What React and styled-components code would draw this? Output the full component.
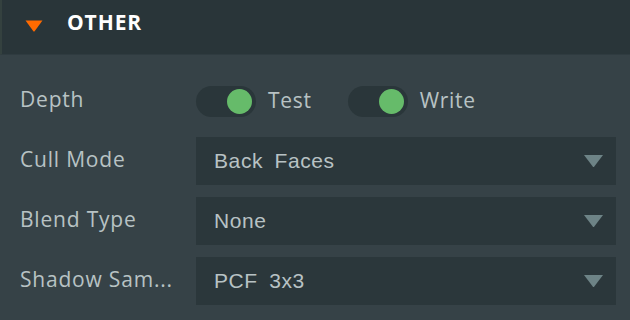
import React from "react";
import styled, { createGlobalStyle } from "styled-components";

const Global = createGlobalStyle`
  html, body { margin: 0; padding: 0; background: #364247; }
  body { width: 630px; height: 320px; overflow: hidden; font-family: "Open Sans", sans-serif; }
`;

const Panel = styled.div`
  width: 630px;
  height: 320px;
  background: #364247;
  display: flex;
  flex-direction: column;
`;

const Header = styled.div`
  height: 55px;
  background: #293539;
  border-left: 2px solid #34413f;
  border-bottom: 1px solid #2f3b40;
  display: flex;
  align-items: flex-start;
  padding: 8px 0 0 23px;
  box-sizing: border-box;
  flex-shrink: 0;
`;

const Caret = styled.svg`
  width: 18px;
  height: 12px;
  margin: 12px 24px 0 0;
`;

const Title = styled.div`
  color: #ffffff;
  font-family: "Open Sans", sans-serif;
  font-weight: 700;
  font-size: 21px;
  letter-spacing: 0.9px;
`;

const Body = styled.div`
  display: flex;
  flex-direction: column;
  gap: 12px;
  padding: 22px 14px 0 20px;
`;

const Row = styled.div`
  display: flex;
  align-items: center;
  height: 48px;
`;

const Label = styled.div`
  width: 176px;
  flex-shrink: 0;
  color: #b8c2c4;
  font-size: 21px;
  letter-spacing: 0.8px;
  white-space: nowrap;
  margin-top: -4px;
`;

const Toggles = styled.div`
  display: flex;
  align-items: center;
`;

const Toggle = styled.div`
  width: 60px;
  height: 31px;
  border-radius: 16px;
  background: #2a363a;
  display: flex;
  align-items: center;
  justify-content: ${(p) => (p.$on ? "flex-end" : "flex-start")};
  padding: 0 4px;
  box-sizing: border-box;
`;

const Knob = styled.div`
  width: 25px;
  height: 25px;
  border-radius: 50%;
  background: #66bb6a;
`;

const ToggleText = styled.span`
  color: #b8c2c4;
  font-size: 21px;
  letter-spacing: 0.7px;
  margin-left: 12px;
  margin-right: ${(p) => p.$gap || 0}px;
  margin-top: -2px;
`;

const Select = styled.div`
  flex: 1;
  height: 48px;
  background: #2b373b;
  display: flex;
  align-items: center;
  justify-content: space-between;
  padding: 0 12px 0 18px;
  box-sizing: border-box;
`;

const SelectText = styled.span`
  color: #b8c2c4;
  font-family: "Liberation Sans", Arial, sans-serif;
  font-size: 21px;
  letter-spacing: 0.6px;
  word-spacing: 5px;
`;

const Arrow = styled.svg`
  width: 21px;
  height: 14px;
`;

function Dropdown({ value }) {
  return (
    <Select>
      <SelectText>{value}</SelectText>
      <Arrow viewBox="0 0 21 14">
        <path d="M1 1 L20 1 L11.3 12.6 Q10.5 13.6 9.7 12.6 Z" fill="#6d8386" />
      </Arrow>
    </Select>
  );
}

export default function App() {
  return (
    <>
      <Global />
      <Panel>
        <Header>
          <Caret viewBox="0 0 18 12">
            <path d="M0.5 0.5 L17.5 0.5 L9.8 11 Q9 12 8.2 11 Z" fill="#ff6a00" />
          </Caret>
          <Title>OTHER</Title>
        </Header>
        <Body>
          <Row>
            <Label>Depth</Label>
            <Toggles>
              <Toggle $on>
                <Knob />
              </Toggle>
              <ToggleText $gap={36}>Test</ToggleText>
              <Toggle $on>
                <Knob />
              </Toggle>
              <ToggleText>Write</ToggleText>
            </Toggles>
          </Row>
          <Row>
            <Label>Cull Mode</Label>
            <Dropdown value="Back Faces" />
          </Row>
          <Row>
            <Label>Blend Type</Label>
            <Dropdown value="None" />
          </Row>
          <Row>
            <Label>Shadow Sam...</Label>
            <Dropdown value="PCF 3x3" />
          </Row>
        </Body>
      </Panel>
    </>
  );
}
